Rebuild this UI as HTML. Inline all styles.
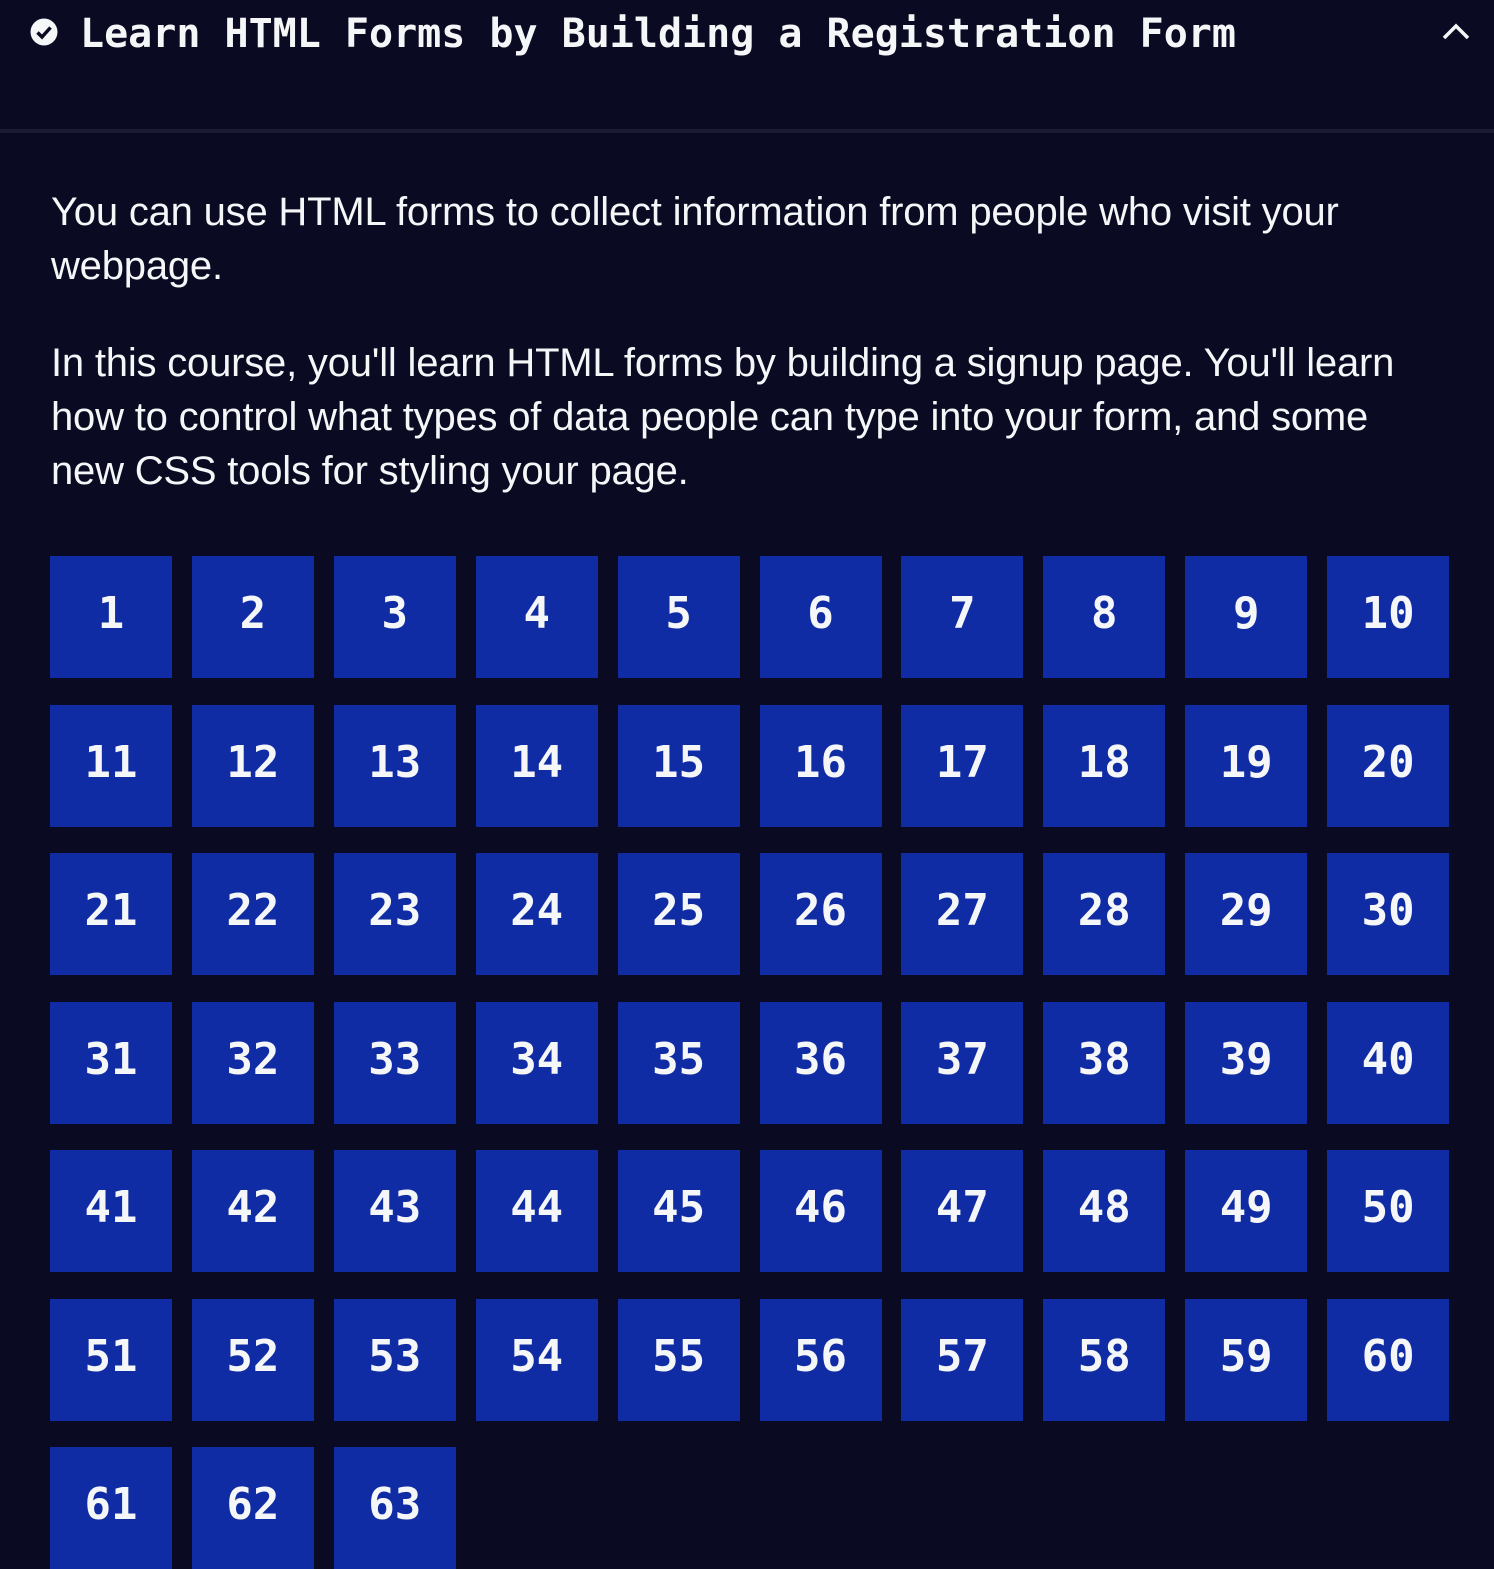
<!DOCTYPE html>
<html><head><style>
html,body{margin:0;padding:0;background:#0a0a23;width:1494px;height:1552px;overflow:hidden}
.hdr{position:absolute;left:0;top:0;width:1494px;height:129px;border-bottom:4px solid #1b1b32}
.title{position:absolute;left:80px;top:11px;font:bold 40px "DejaVu Sans Mono","Liberation Mono",monospace;color:#f5f6f7;white-space:nowrap}
.chk{position:absolute;left:30px;top:18px}
.car{position:absolute;left:1442px;top:22px}
p{position:absolute;left:51px;margin:0;width:1440px;font:40px "Liberation Sans",sans-serif;color:#f5f6f7;line-height:54px;letter-spacing:-0.2px;white-space:nowrap}
.sq{position:absolute;width:122px;height:122px;background:#0f2ca4;color:#f5f6f7;font:bold 44px "DejaVu Sans Mono","Liberation Mono",monospace;text-align:center;line-height:116px}
</style></head><body>
<div class="hdr">
<svg class="chk" width="28" height="28" viewBox="0 0 28 28"><circle cx="14" cy="14" r="13.5" fill="#f5f6f7"/><path d="M7.5 14.5 L12 19 L20.5 9.5" stroke="#0a0a23" stroke-width="3.5" fill="none"/></svg>
<div class="title">Learn HTML Forms by Building a Registration Form</div>
<svg class="car" width="28" height="18" viewBox="0 0 28 18"><path d="M2 16 L14 4 L26 16" stroke="#f5f6f7" stroke-width="3.5" fill="none"/></svg>
</div>
<p style="top:185px">You can use HTML forms to collect information from people who visit your<br>webpage.</p>
<p style="top:336px">In this course, you'll learn HTML forms by building a signup page. You'll learn<br>how to control what types of data people can type into your form, and some<br>new CSS tools for styling your page.</p>
<div id="g"></div>
<script>
var h='';for(var i=0;i<63;i++){var r=Math.floor(i/10),c=i%10;h+='<div class="sq" style="left:'+(50+c*141.9)+'px;top:'+(556+r*148.5)+'px">'+(i+1)+'</div>';}
document.getElementById('g').innerHTML=h;
</script>
</body></html>
